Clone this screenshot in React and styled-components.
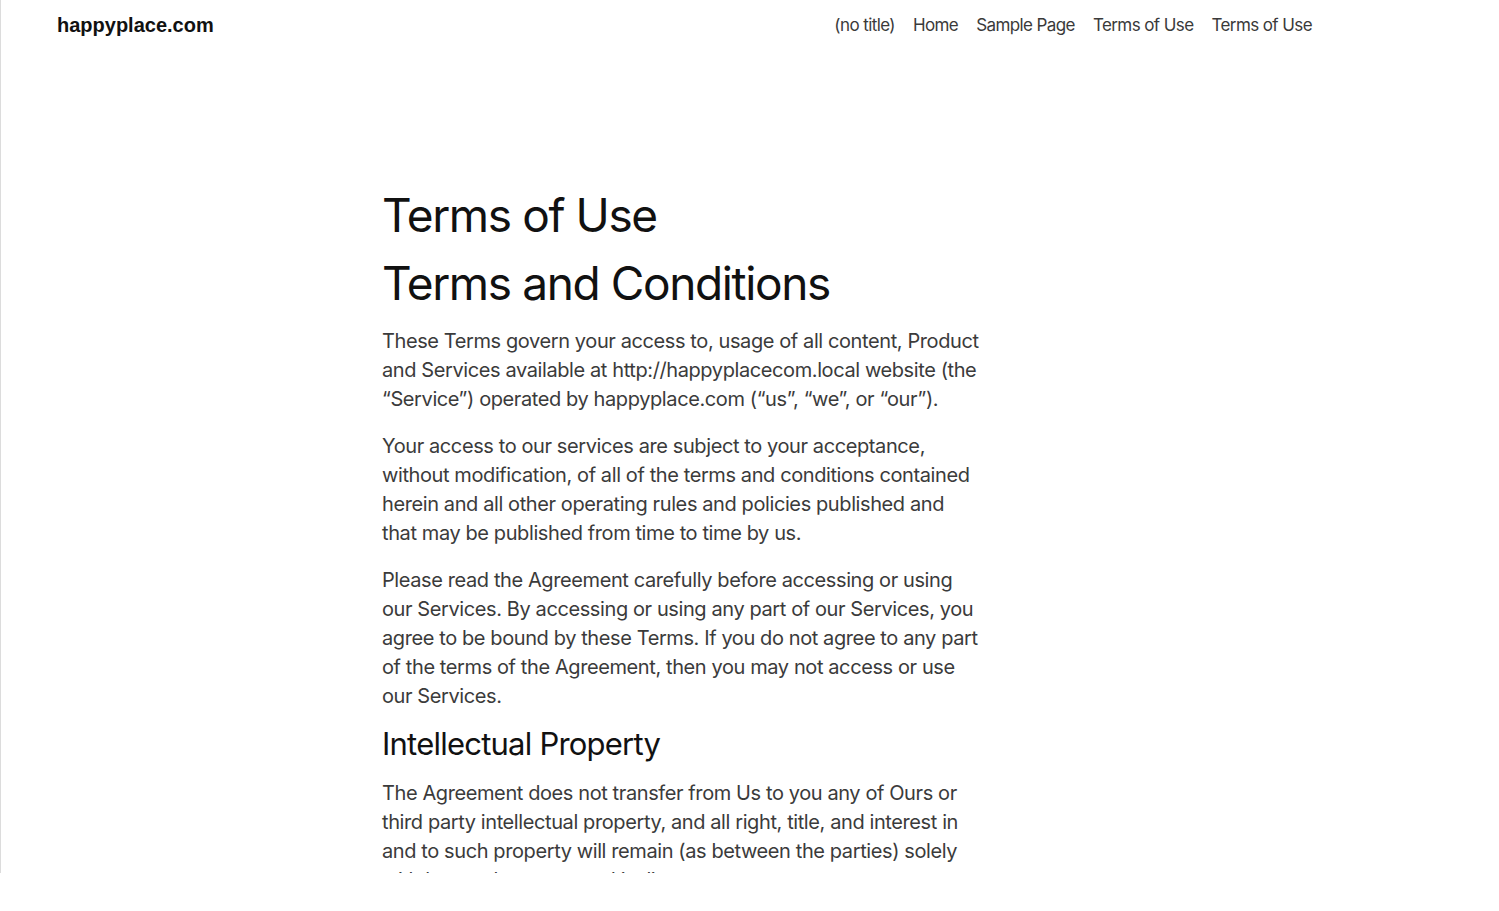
import React from "react";
import styled, { createGlobalStyle } from "styled-components";

const GlobalStyle = createGlobalStyle`
  html, body {
    margin: 0;
    padding: 0;
    background: #ffffff;
  }
  * {
    box-sizing: border-box;
  }
`;

const Frame = styled.div`
  width: 1499px;
  height: 873px;
  overflow: hidden;
  border-left: 1px solid #dcdcdc;
  background: #ffffff;
`;

const Header = styled.header`
  display: flex;
  align-items: center;
  justify-content: space-between;
  height: 50px;
  padding: 0 187px 0 56px;
`;

const Logo = styled.a`
  font-family: "Liberation Sans", Arial, sans-serif;
  font-weight: 700;
  font-size: 20px;
  color: #111;
  text-decoration: none;
`;

const Nav = styled.nav`
  display: flex;
  gap: 18px;
`;

const NavLink = styled.a`
  font-family: Inter, "Noto Sans", sans-serif;
  font-size: 17px;
  letter-spacing: -0.035em;
  color: #3a3a3a;
  text-decoration: none;
`;

const Main = styled.main`
  padding: 131px 0 0 381px;
  width: 1000px;
`;

const Title = styled.h1`
  margin: 0;
  font-family: Inter, "Noto Sans", sans-serif;
  font-weight: 400;
  font-size: 46px;
  line-height: 68px;
  letter-spacing: -0.03em;
  color: #111;
`;

const SubTitle = styled(Title).attrs({ as: "h2" })``;

const SectionTitle = styled.h3`
  margin: 14px 0 16px;
  font-family: Inter, "Noto Sans", sans-serif;
  font-weight: 400;
  font-size: 31px;
  line-height: 38px;
  letter-spacing: -0.025em;
  color: #111;
`;

const Paragraph = styled.p`
  margin: 18px 0 0;
  width: 601px;
  font-family: Inter, "Noto Sans", sans-serif;
  font-size: 20px;
  line-height: 29px;
  letter-spacing: -0.02em;
  color: #3b3b3b;

  ${SubTitle} + & {
    margin-top: 10px;
  }

  ${SectionTitle} + & {
    margin-top: 0;
  }
`;

const links = ["(no title)", "Home", "Sample Page", "Terms of Use", "Terms of Use"];

export default function App() {
  return (
    <>
      <GlobalStyle />
      <Frame>
        <Header>
          <Logo href="#">happyplace.com</Logo>
          <Nav>
            {links.map((l, i) => (
              <NavLink key={i} href="#">
                {l}
              </NavLink>
            ))}
          </Nav>
        </Header>
        <Main>
          <Title>Terms of Use</Title>
          <SubTitle>Terms and Conditions</SubTitle>
          <Paragraph>
            These Terms govern your access to, usage of all content, Product
            and Services available at http://happyplacecom.local website (the
            “Service”) operated by happyplace.com (“us”, “we”, or “our”).
          </Paragraph>
          <Paragraph>
            Your access to our services are subject to your acceptance,
            without modification, of all of the terms and conditions contained
            herein and all other operating rules and policies published and
            that may be published from time to time by us.
          </Paragraph>
          <Paragraph>
            Please read the Agreement carefully before accessing or using our
            Services. By accessing or using any part of our Services, you agree
            to be bound by these Terms. If you do not agree to any part of the
            terms of the Agreement, then you may not access or use our
            Services.
          </Paragraph>
          <SectionTitle>Intellectual Property</SectionTitle>
          <Paragraph>
            The Agreement does not transfer from Us to you any of Ours or
            third party intellectual property, and all right, title, and
            interest in and to such property will remain (as between the
            parties) solely with happyplace.com and its licensors.
          </Paragraph>
        </Main>
      </Frame>
    </>
  );
}
